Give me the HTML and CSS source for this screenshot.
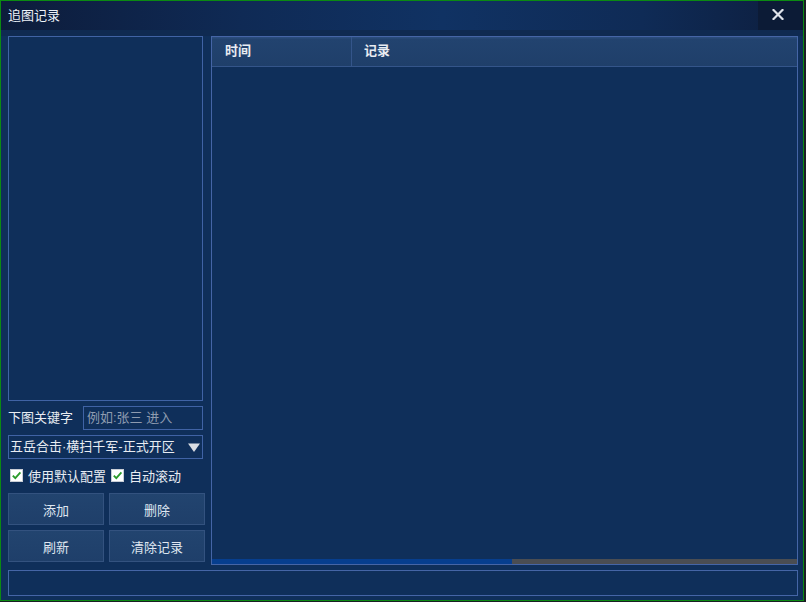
FILE: index.html
```html
<!DOCTYPE html>
<html lang="zh">
<head>
<meta charset="utf-8">
<title>追图记录</title>
<link rel="stylesheet" href="styles.css">
</head>
<body>
<div class="window">
  <div class="titlebar">
    <span class="title">追图记录</span>
    <div class="close">
      <svg width="12" height="11" viewBox="0 0 12 11"><path d="M1.5 1 L10.5 10 M10.5 1 L1.5 10" stroke="#dfe3ea" stroke-width="2.2" stroke-linecap="square"/></svg>
    </div>
  </div>
  <div class="content">
    <div class="top">
      <div class="left">
        <div class="list"></div>
        <div class="kwrow">
          <span class="label">下图关键字</span>
          <div class="input">例如:张三 进入</div>
        </div>
        <div class="select">
          <span>五岳合击·横扫千军-正式开区</span>
          <svg class="arrow" width="14" height="11" viewBox="0 0 14 11"><polygon points="1,1.5 13,1.5 7,10" fill="#d9dde3"/></svg>
        </div>
        <div class="checks">
          <label class="check"><span class="box"><svg width="11" height="11" viewBox="0 0 11 11"><path d="M1.8 5.6 L4.3 8.2 L9.4 2.4" stroke="#2a9a2a" stroke-width="1.8" fill="none"/></svg></span>使用默认配置</label>
          <label class="check"><span class="box"><svg width="11" height="11" viewBox="0 0 11 11"><path d="M1.8 5.6 L4.3 8.2 L9.4 2.4" stroke="#2a9a2a" stroke-width="1.8" fill="none"/></svg></span>自动滚动</label>
        </div>
        <div class="buttons">
          <div class="btn">添加</div>
          <div class="btn">删除</div>
          <div class="btn">刷新</div>
          <div class="btn">清除记录</div>
        </div>
      </div>
      <div class="table">
        <div class="thead">
          <div class="th th-time">时间</div>
          <div class="th th-rec">记录</div>
        </div>
        <div class="tbody"></div>
        <div class="hscroll"><div class="thumb"></div></div>
      </div>
    </div>
    <div class="status"></div>
  </div>
</div>
</body>
</html>
```
FILE: styles.css
```css
* { box-sizing: border-box; }
html, body { margin: 0; padding: 0; }
body {
  background: #1a1f24;
  width: 806px;
  height: 602px;
  overflow: hidden;
  font-family: "Liberation Sans", "Noto Sans CJK SC", sans-serif;
  font-size: 13px;
  color: #e8ecf2;
}
.window {
  width: 804px;
  height: 601px;
  border: 1px solid #0b8a12;
  background: #0f2f5a;
  display: flex;
  flex-direction: column;
}
.titlebar {
  height: 29px;
  flex: none;
  display: flex;
  align-items: center;
  background: linear-gradient(90deg, #0d1c3b 0%, #0f2a55 30%, #103263 55%, #0f2b56 80%, #0d1e3e 100%);
}
.title {
  padding-left: 7px;
  line-height: 29px;
  color: #eef2f8;
}
.close {
  margin-left: auto;
  width: 45px;
  height: 29px;
  background: #0c1b36;
  display: flex;
  align-items: center;
  justify-content: center;
  padding-right: 6px;
  padding-bottom: 2px;
}
.content {
  flex: 1;
  padding: 6px 5px 4px 7px;
  display: flex;
  flex-direction: column;
  gap: 5px;
  background: linear-gradient(180deg, #0f2a51 0px, #0f2a51 6px, #0f2f5a 6px);
}
.top {
  height: 529px;
  display: flex;
  gap: 6px;
}
.left {
  width: 197px;
  flex: none;
  display: flex;
  flex-direction: column;
}
.list {
  width: 195px;
  height: 365px;
  border: 1px solid #4063a5;
}
.kwrow {
  margin-top: 5px;
  height: 24px;
  display: flex;
  align-items: center;
  width: 195px;
}
.label {
  width: 75px;
  flex: none;
  line-height: 24px;
}
.input {
  flex: 1;
  height: 24px;
  border: 1px solid #4063a5;
  color: #8e9bb0;
  padding-left: 3px;
  line-height: 21px;
}
.select {
  margin-top: 5px;
  width: 195px;
  height: 24px;
  border: 1px solid #4063a5;
  display: flex;
  align-items: center;
  padding-left: 1px;
  line-height: 22px;
}
.arrow {
  margin-left: auto;
  margin-right: 1px;
  filter: blur(0.3px);
}
.checks {
  margin-top: 7px;
  height: 18px;
  display: flex;
  align-items: center;
  gap: 3px;
}
.check {
  display: flex;
  align-items: center;
  gap: 5px;
  padding-left: 2px;
}
.box {
  width: 13px;
  height: 13px;
  background: #ffffff;
  border: 1px solid #c9ced6;
  display: flex;
  align-items: center;
  justify-content: center;
}
.buttons {
  margin-top: 9px;
  display: grid;
  grid-template-columns: 96px 96px;
  grid-auto-rows: 32px;
  column-gap: 5px;
  row-gap: 5px;
}
.btn {
  background: linear-gradient(180deg, #22446f 0%, #1f3f6a 100%);
  border: 1px solid #33527f;
  display: flex;
  align-items: center;
  justify-content: center;
  color: #dfe6f0;
}
.table {
  flex: 1;
  border: 1px solid #4565a6;
  display: flex;
  flex-direction: column;
}
.thead {
  height: 30px;
  display: flex;
  background: linear-gradient(180deg, #2a4c7c 0px, #2a4c7c 1px, #22436f 2px, #1f3f6a 100%);
  border-bottom: 1px solid #34558a;
  font-weight: bold;
}
.th {
  line-height: 28px;
  padding-left: 13px;
}
.th-time {
  width: 140px;
  border-right: 1px solid #34558a;
}
.th-rec { flex: 1; padding-left: 12px; }
.tbody { flex: 1; }
.hscroll {
  height: 5px;
  background: #4a4d52;
  display: flex;
}
.thumb {
  width: 300px;
  background: #063e8e;
}
.status {
  height: 26px;
  width: 790px;
  border: 1px solid #4565a6;
}
```
